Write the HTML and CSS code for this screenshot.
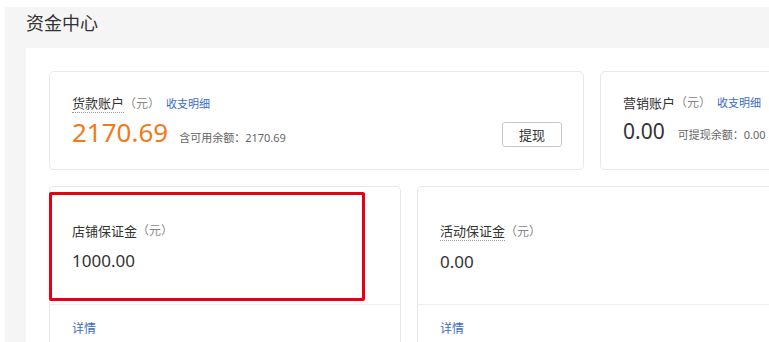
FILE: index.html
```html
<!DOCTYPE html>
<html lang="zh-CN">
<head>
<meta charset="utf-8">
<title>资金中心</title>
<link rel="stylesheet" href="styles.css">
</head>
<body>
<div class="page">
  <h1 class="title">资金中心</h1>
  <div class="panel">
    <div class="row row-top">
      <div class="card acct acct-main">
        <div class="acct-info">
          <div class="label-line">
            <span class="label dotted">货款账户</span><span class="unit">（元）</span><a class="link">收支明细</a>
          </div>
          <div class="amount-line">
            <span class="amount orange">2170.69</span><span class="sub">含可用余额：2170.69</span>
          </div>
        </div>
        <button class="btn">提现</button>
      </div>
      <div class="card acct acct-side">
        <div class="acct-info">
          <div class="label-line">
            <span class="label">营销账户</span><span class="unit">（元）</span><a class="link">收支明细</a>
          </div>
          <div class="amount-line">
            <span class="amount mid">0.00</span><span class="sub">可提现余额：0.00</span>
          </div>
        </div>
      </div>
    </div>
    <div class="row row-bottom">
      <div class="card deposit deposit-shop">
        <div class="dep-body">
          <div class="label-line"><span class="label">店铺保证金</span><span class="unit">（元）</span></div>
          <div class="dep-amount">1000.00</div>
        </div>
        <div class="dep-foot"><a class="link">详情</a></div>
        <div class="highlight"></div>
      </div>
      <div class="card deposit deposit-act">
        <div class="dep-body">
          <div class="label-line"><span class="label dotted">活动保证金</span><span class="unit">（元）</span></div>
          <div class="dep-amount">0.00</div>
        </div>
        <div class="dep-foot"><a class="link">详情</a></div>
      </div>
    </div>
  </div>
</div>
</body>
</html>
```
FILE: styles.css
```css
html, body {
  margin: 0;
  padding: 0;
  background: #fff;
  overflow: hidden;
  height: 342px;
}
body {
  font-family: "Noto Sans", "Noto Sans CJK SC", sans-serif;
  color: #333;
}
.page {
  margin: 7px 0 0 5px;
  background: #f5f5f5;
  padding-left: 21px;
  height: 335px;
  overflow: hidden;
}
.title {
  margin: 0;
  height: 41px;
  line-height: 32px;
  font-size: 18px;
  font-weight: normal;
  color: #333;
}
.panel {
  background: #fff;
  padding: 23px 0 0 23px;
  height: 271px;
  overflow: hidden;
}
.row {
  display: flex;
  gap: 16px;
}
.row-top {
  height: 99px;
  margin-bottom: 16px;
}
.card {
  border: 1px solid #e8e8e8;
  border-radius: 5px;
  box-sizing: border-box;
  background: #fff;
  flex-shrink: 0;
}
.acct {
  display: flex;
  padding: 22px 21px 22px 22px;
}
.acct-main {
  width: 535px;
  justify-content: space-between;
}
.acct-side {
  width: 260px;
}
.label-line {
  font-size: 13px;
  line-height: 18px;
  display: flex;
  align-items: center;
  white-space: nowrap;
}
.label {
  color: #333;
}
.dotted {
  border-bottom: 1px dotted #999;
}
.unit {
  color: #888;
  font-size: 12px;
}
.link {
  color: #3a6bc2;
  font-size: 11px;
  margin-left: 6px;
}
.amount-line {
  display: flex;
  align-items: baseline;
  white-space: nowrap;
  margin-top: 1px;
}
.amount {
  line-height: 36px;
}
.orange {
  color: #f07a1c;
  font-size: 26px;
}
.mid {
  color: #333;
  font-size: 21px;
}
.sub {
  font-size: 11px;
  color: #666;
  margin-left: 11px;
}
.acct-side .sub {
  margin-left: 13px;
}
.btn {
  align-self: flex-end;
  width: 60px;
  height: 25px;
  border: 1px solid #c8c8c8;
  border-radius: 3px;
  background: #fff;
  font-family: inherit;
  font-size: 13px;
  color: #333;
  padding: 0;
}
.row-bottom {
  height: 156px;
}
.deposit {
  position: relative;
  border-bottom: none;
  border-radius: 5px 5px 0 0;
}
.deposit-shop {
  width: 352px;
}
.deposit-act {
  width: 400px;
}
.dep-body {
  height: 118px;
  padding: 35px 0 0 22px;
  box-sizing: border-box;
  border-bottom: 1px solid #eee;
}
.dep-amount {
  font-size: 17px;
  line-height: 24px;
  margin-top: 9px;
  color: #333;
}
.dep-foot {
  padding: 13px 0 0 22px;
  line-height: 18px;
}
.dep-foot .link {
  margin-left: 0;
  font-size: 12px;
}
.highlight {
  position: absolute;
  left: -1px;
  top: 5px;
  width: 316px;
  height: 109px;
  box-sizing: border-box;
  border: 3px solid #e60012;
  border-radius: 2px;
}
```
